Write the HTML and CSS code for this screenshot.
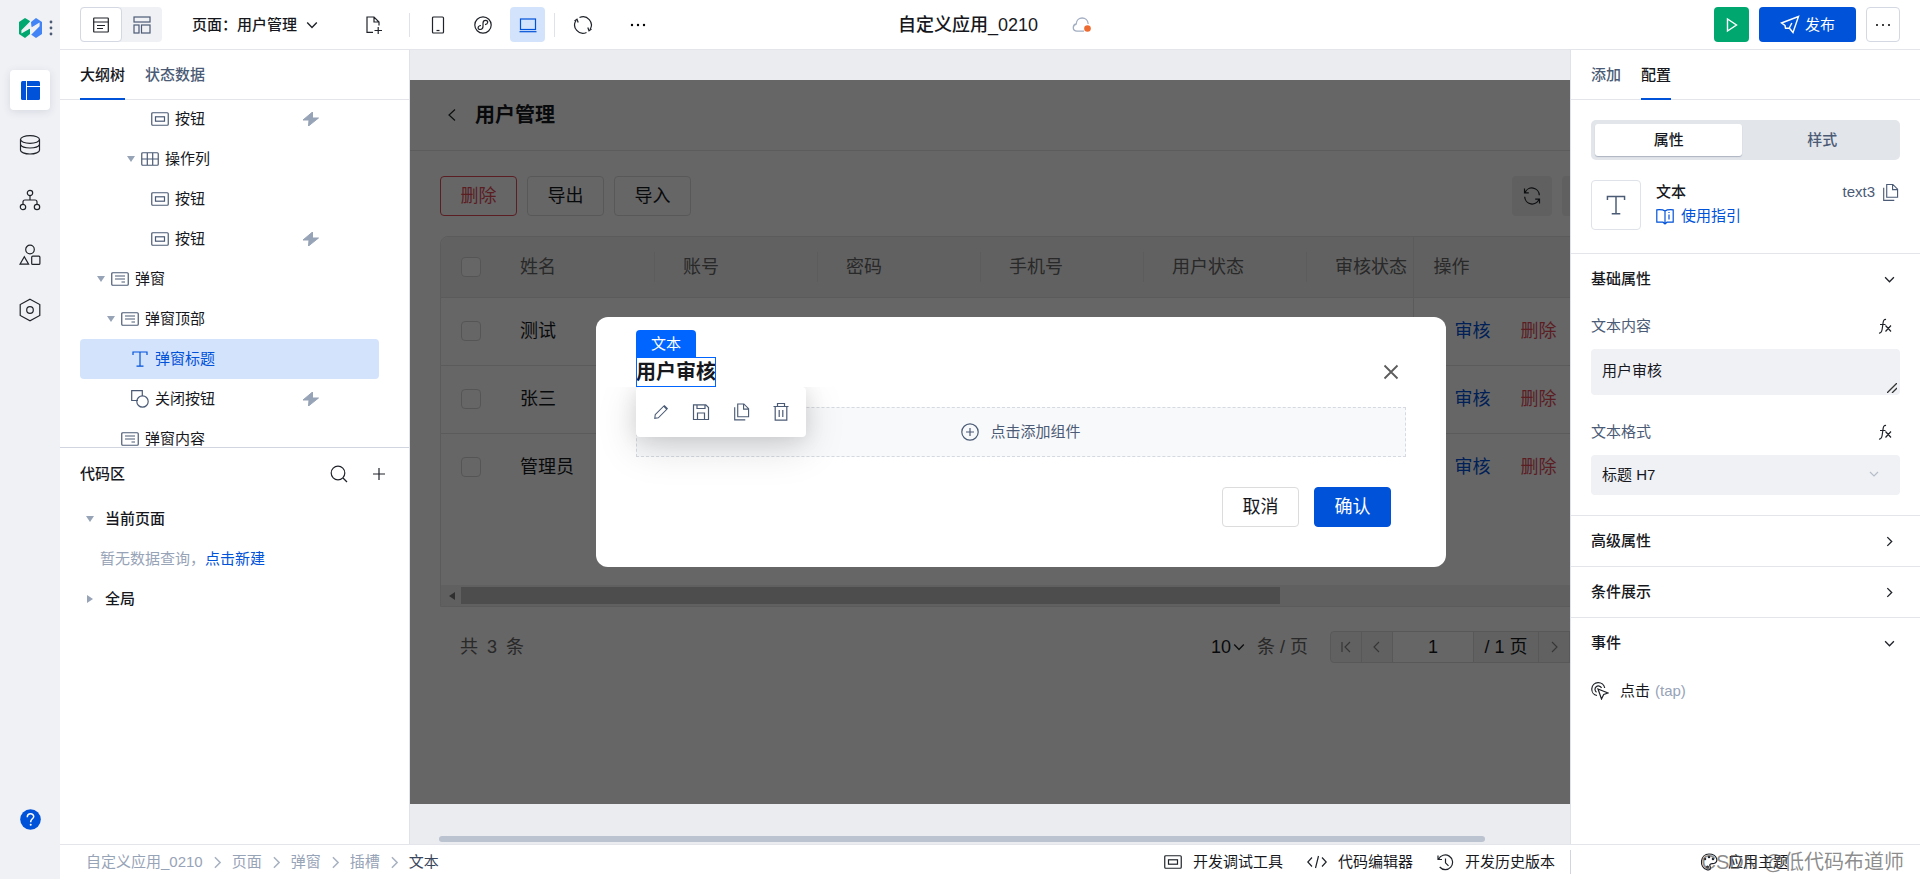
FILE: index.html
```html
<!DOCTYPE html>
<html lang="zh-CN">
<head>
<meta charset="utf-8">
<title>自定义应用_0210</title>
<link rel="stylesheet" href="styles.css">
</head>
<body>
<svg class="sprite" aria-hidden="true">
  <symbol id="i-button" viewBox="0 0 18 14"><rect x=".75" y=".75" width="16.5" height="12.5" rx="1"/><rect x="4.5" y="4.8" width="9" height="4.4"/></symbol>
  <symbol id="i-columns" viewBox="0 0 18 14"><rect x=".75" y=".75" width="16.5" height="12.5" rx="1"/><path d="M.8 7h16.4M6.3 1v12M11.7 1v12"/></symbol>
  <symbol id="i-modal" viewBox="0 0 18 14"><rect x=".75" y=".75" width="16.5" height="12.5" rx="1"/><path d="M4 4h10M4 7h10M10.5 10h3.5"/></symbol>
  <symbol id="i-text" viewBox="0 0 18 18"><path d="M2 5V2h14v3M9 2v14M5.5 16.2h7"/></symbol>
  <symbol id="i-shape" viewBox="0 0 18 18"><path d="M7 10.5H.7V.7h10.6V6"/><circle cx="11.5" cy="11.5" r="5.7"/></symbol>
  <symbol id="i-bolt" viewBox="0 0 16 14"><path d="M9.500 0 0 8h6l-.5 6L15.500 6H9.500z"/></symbol>
  <symbol id="i-down" viewBox="0 0 10 10"><path d="M1 3l4 4 4-4"/></symbol>
  <symbol id="i-right" viewBox="0 0 10 10"><path d="M3 1l4 4-4 4"/></symbol>
  <symbol id="i-left" viewBox="0 0 10 14"><path d="M8 1.500 2 7l6 5.500"/></symbol>
  <symbol id="i-copy" viewBox="0 0 18 20"><path d="M5 1.500h6.500L16.500 6.500V15H5zM11.200 1.700V7h5.200M1.800 5v13.300H13"/></symbol>
  <symbol id="i-fx" viewBox="0 0 16 16"><path d="M2 15c2.500.4 2.800-1.800 3.200-4L6.200 4C6.600 2 7.500 1 9 1.600M3 6.500h5.500M8.500 7.500l5.500 6M14 7.500l-5.500 6"/></symbol>
</svg>

<div class="app">
  <nav class="rail" aria-label="主导航">
    <div class="brand">
      <svg width="23" height="20" viewBox="0 0 23 20"><path d="M0 4 6 0l5 3v13l-5 4-6-4z" fill="#00a870"/><path d="M12 4l5-4 6 4v12l-6 4-5-3.500z" fill="#4284f5"/><path d="M11.500 0v4L3 12.500v2l9.500-5.500M11.500 20v-3.500L20 8V5.500L11 11" fill="#f0f1f5" stroke="#f0f1f5" stroke-width="1.200"/></svg>
      <svg width="4" height="16" viewBox="0 0 4 16" fill="#4b5b76"><circle cx="2" cy="2" r="1.400"/><circle cx="2" cy="8" r="1.400"/><circle cx="2" cy="14" r="1.400"/></svg>
    </div>
    <button class="rail-btn active" aria-label="页面"><svg width="19" height="19" viewBox="0 0 19 19"><rect width="19" height="19" rx="1.500" fill="#0052d9"/><path d="M5.500 0v19M5.500 5.500H19" stroke="#fff" stroke-width="1"/></svg></button>
    <button class="rail-btn" aria-label="数据"><svg class="line" width="22" height="22" viewBox="0 0 22 22"><ellipse cx="11" cy="5.500" rx="9.500" ry="3.800"/><path d="M1.500 5.500v10.700c0 2 4.200 3.800 9.500 3.800s9.500-1.800 9.500-3.800V5.500M1.500 10.500c1 2.200 4 3.500 9.500 3.500s8.500-1.300 9.500-3.500"/></svg></button>
    <button class="rail-btn" aria-label="流程"><svg class="line" width="22" height="22" viewBox="0 0 22 22"><circle cx="11" cy="4" r="2.700"/><circle cx="4" cy="18" r="2.700"/><circle cx="18" cy="18" r="2.700"/><path d="M11 6.700V11M4 15.300V13a2 2 0 0 1 2-2h10a2 2 0 0 1 2 2v2.300"/></svg></button>
    <button class="rail-btn" aria-label="组件"><svg class="line" width="22" height="22" viewBox="0 0 22 22"><circle cx="11" cy="5.500" r="4.300"/><path d="M5.300 12.800 1 20.200h8.600z"/><rect x="12.700" y="12.200" width="8.200" height="8.200" rx="1"/></svg></button>
    <button class="rail-btn" aria-label="设置"><svg class="line" width="22" height="24" viewBox="0 0 22 24"><path d="M11 1.200 20.800 6.500v11L11 22.800 1.200 17.500v-11z"/><circle cx="11" cy="12" r="3.300"/></svg></button>
    <button class="rail-btn help" aria-label="帮助"><svg width="21" height="21" viewBox="0 0 21 21"><circle cx="10.500" cy="10.500" r="10.300" fill="#0052d9"/><path d="M7.300 8.200c0-4.700 6.700-4.200 6.400-.5-.2 2-3 2.300-3 5v.5" fill="none" stroke="#fff" stroke-width="1.500"/><circle cx="10.700" cy="15.700" r="1" fill="#fff"/></svg></button>
  </nav>

  <header class="topbar">
    <div class="view-switch">
      <button class="view on" aria-label="大纲"><svg class="line" width="16" height="16" viewBox="0 0 16 16"><rect x=".7" y="1" width="14.600" height="14" rx=".5"/><path d="M.7 5h14.600M4 8.500h8M4 11.500h6"/></svg></button>
      <button class="view" aria-label="布局"><svg class="line slate" width="18" height="18" viewBox="0 0 18 18"><rect x="1" y="1" width="16" height="5"/><rect x="1" y="9" width="5" height="8"/><rect x="8.500" y="9" width="8.500" height="8"/></svg></button>
    </div>
    <button class="page-pick">页面：用户管理 <svg class="line" width="12" height="12"><use href="#i-down"/></svg></button>
    <button class="tool new-page" aria-label="新建页面"><svg class="line" width="18" height="20" viewBox="0 0 18 20"><path d="M8 17.300H2V2h7l5 5v3.500M9 2v5h5M9.500 15.500H17M13.200 12v7"/></svg></button>
    <span class="rule"></span>
    <button class="tool" aria-label="手机"><svg class="line" width="14" height="20" viewBox="0 0 14 20"><rect x="1.500" y="2" width="11" height="16" rx="1"/><path d="M5.500 15.500h3"/></svg></button>
    <button class="tool" aria-label="小程序"><svg class="line" width="18" height="18" viewBox="0 0 18 18"><circle cx="9" cy="9" r="8.200"/><path d="M7 9.500c-4 .5-3.500 4.200-.8 4 1.600-.1 2.800-1.300 2.800-3V7.200c0-1.600 1.200-2.800 2.700-2.800 2.800 0 2.800 3.600-.7 4.200"/></svg></button>
    <button class="tool on" aria-label="电脑"><svg class="line blue" width="18" height="16" viewBox="0 0 18 16"><rect x="1.500" y="2" width="15" height="10.500"/><path d="M.5 14.700h17"/></svg></button>
    <span class="rule"></span>
    <button class="tool refresh" aria-label="刷新"><svg class="line" width="20" height="20" viewBox="0 0 20 20"><path d="M6.500 2.500A8.300 8.300 0 0 1 17 14.500M13.500 17.500A8.300 8.300 0 0 1 3 5.500"/><path d="M1.500 6 4 4.300 5.200 7.500M14.800 12.500 16 15.700l2.500-1.700"/></svg></button>
    <button class="tool" aria-label="更多"><svg width="16" height="4" viewBox="0 0 16 4"><circle cx="2" cy="2" r="1.200"/><circle cx="8" cy="2" r="1.200"/><circle cx="14" cy="2" r="1.200"/></svg></button>
    <h1 class="app-name">自定义应用_0210 <svg width="20" height="16" viewBox="0 0 20 16"><path d="M12 14.200H5C.2 14 .2 8 4.200 7c.4-8 11.500-8 12 0" fill="none" stroke="#a3aec2" stroke-width="1.300"/><circle cx="15.500" cy="11.500" r="3.300" fill="#ed6b30"/></svg></h1>
    <div class="actions">
      <button class="run" aria-label="预览"><svg width="12" height="16" viewBox="0 0 12 16"><path d="M1.500 2v12l9-6z" fill="none" stroke="#fff" stroke-width="1.400"/></svg></button>
      <button class="publish"><svg width="20" height="19" viewBox="0 0 20 19"><path d="M1.500 8 18.500 1.500 13 17.500 9.300 13 5.500 13.200 5 10.500zM9.300 13l2.500-5" fill="none" stroke="#fff" stroke-width="1.400"/></svg>发布</button>
      <button class="more" aria-label="更多操作"><svg width="16" height="4" viewBox="0 0 16 4"><circle cx="2" cy="2" r="1"/><circle cx="8" cy="2" r="1"/><circle cx="14" cy="2" r="1"/></svg></button>
    </div>
  </header>

  <aside class="left">
    <div class="tabs"><button class="tab on">大纲树</button><button class="tab">状态数据</button></div>
    <ul class="tree">
      <li class="node d4"><svg class="ico w"><use href="#i-button"/></svg>按钮<svg class="bolt"><use href="#i-bolt"/></svg></li>
      <li class="node d3"><i class="caret"></i><svg class="ico w"><use href="#i-columns"/></svg>操作列</li>
      <li class="node d4"><svg class="ico w"><use href="#i-button"/></svg>按钮</li>
      <li class="node d4"><svg class="ico w"><use href="#i-button"/></svg>按钮<svg class="bolt"><use href="#i-bolt"/></svg></li>
      <li class="node d0"><i class="caret"></i><svg class="ico w"><use href="#i-modal"/></svg>弹窗</li>
      <li class="node d1"><i class="caret"></i><svg class="ico w"><use href="#i-modal"/></svg>弹窗顶部</li>
      <li class="node d2 on"><svg class="ico"><use href="#i-text"/></svg>弹窗标题</li>
      <li class="node d2"><svg class="ico"><use href="#i-shape"/></svg>关闭按钮<svg class="bolt"><use href="#i-bolt"/></svg></li>
      <li class="node d1"><svg class="ico w"><use href="#i-modal"/></svg>弹窗内容</li>
    </ul>
    <section class="code">
      <div class="code-head"><h2>代码区</h2>
        <button aria-label="搜索"><svg class="line" width="18" height="18" viewBox="0 0 18 18"><circle cx="8" cy="8" r="6.800"/><path d="M13 13l4 4"/></svg></button>
        <button aria-label="新建"><svg class="line" width="14" height="14" viewBox="0 0 14 14"><path d="M1 7h12M7 1v12"/></svg></button>
      </div>
      <div class="group"><i class="caret"></i>当前页面</div>
      <p class="empty">暂无数据查询，<a href="#new">点击新建</a></p>
      <div class="group"><i class="caret side"></i>全局</div>
    </section>
  </aside>

  <main class="stage">
    <div class="viewport">
      <div class="device">
        <div class="page-head"><svg class="line" width="10" height="14"><use href="#i-left"/></svg><h2>用户管理</h2></div>
        <div class="page-body">
          <div class="ops">
            <button class="btn danger">删除</button><button class="btn">导出</button><button class="btn">导入</button>
            <button class="sq first" aria-label="刷新表格"><svg class="line" width="18" height="18" viewBox="0 0 18 18"><path d="M1.500 1.500v4.300h4.300M2 5.700a7.400 7.400 0 0 1 14.300 2.500M16.500 16.500v-4.300h-4.300M16 12.300A7.400 7.400 0 0 1 1.700 9.800"/></svg></button>
            <button class="sq" aria-label="表格设置"></button>
          </div>
          <div class="grid">
            <table>
              <colgroup><col class="c-check"><col class="c-data"><col class="c-data"><col class="c-data"><col class="c-data"><col class="c-data"><col class="c-cut"><col></colgroup>
              <thead><tr><th><input type="checkbox" aria-label="全选"></th><th>姓名</th><th>账号</th><th>密码</th><th>手机号</th><th>用户状态</th><th>审核状态</th><th class="fixed-th">操作</th></tr></thead>
              <tbody>
                <tr><td><input type="checkbox" aria-label="测试"></td><td>测试</td><td></td><td></td><td></td><td></td><td></td><td class="fixed"><a href="#a1">审核</a><a class="del" href="#d1">删除</a></td></tr>
                <tr><td><input type="checkbox" aria-label="张三"></td><td>张三</td><td></td><td></td><td></td><td></td><td></td><td class="fixed"><a href="#a2">审核</a><a class="del" href="#d2">删除</a></td></tr>
                <tr><td><input type="checkbox" aria-label="管理员"></td><td>管理员</td><td></td><td></td><td></td><td></td><td></td><td class="fixed"><a href="#a3">审核</a><a class="del" href="#d3">删除</a></td></tr>
              </tbody>
            </table>
            <div class="hbar"><i class="arrow"></i><i class="thumb"></i></div>
          </div>
          <div class="pager">
            <span class="muted total">共 <span class="num">3</span> 条</span>
            <button class="size">10<svg class="line" width="12" height="12"><use href="#i-down"/></svg></button>
            <span class="muted per">条 / 页</span>
            <div class="pages">
              <button aria-label="首页"><svg class="line" width="12" height="12" viewBox="0 0 12 12"><path d="M2 1v10M10 1 5 6l5 5"/></svg></button>
              <button aria-label="上一页"><svg class="line" width="12" height="12" viewBox="0 0 12 12"><path d="M8 1 3 6l5 5"/></svg></button>
              <input type="text" value="1" aria-label="页码"><span class="of">/ 1 页</span>
              <button aria-label="下一页"><svg class="line" width="12" height="12" viewBox="0 0 12 12"><path d="M4 1l5 5-5 5"/></svg></button>
              <button aria-label="末页"></button>
            </div>
          </div>
        </div>

        <div class="mask">
          <div class="dialog" role="dialog" aria-label="用户审核">
            <div class="dialog-head">
              <div class="picked"><span class="badge">文本</span><h3>用户审核</h3>
                <div class="quick">
                  <button aria-label="编辑"><svg class="line slate" width="16" height="16" viewBox="0 0 18 18"><path d="M2.500 12 12 2.500l3.500 3.500L6 15.500l-4 .7zM12.500 1.500l4 4"/></svg></button>
                  <button aria-label="保存"><svg class="line slate" width="18" height="18" viewBox="0 0 18 18"><path d="M1.500 1.800h12.300l2.700 2.700v12h-15zM5 2v3.500h8V2M5.500 16.500V10h7v6.500"/></svg></button>
                  <button aria-label="复制"><svg class="line slate" width="17" height="20"><use href="#i-copy"/></svg></button>
                  <button aria-label="移除"><svg class="line slate" width="18" height="20" viewBox="0 0 18 20"><path d="M1.500 4.500h15M3.200 4.500v13.700h11.600V4.500M5.500 4V1.500h7V4M7.200 8v7M10.800 8v7"/></svg></button>
                </div>
              </div>
              <button class="close" aria-label="关闭"><svg width="16" height="16" viewBox="0 0 16 16"><path d="M1.500 1.500l13 13M14.500 1.500l-13 13" stroke="#5c5c5c" stroke-width="1.800"/></svg></button>
            </div>
            <button class="slot"><svg class="line slate" width="18" height="18" viewBox="0 0 18 18"><circle cx="9" cy="9" r="8.200"/><path d="M5 9h8M9 5v8"/></svg>点击添加组件</button>
            <div class="dialog-foot"><button class="btn">取消</button><button class="btn primary">确认</button></div>
          </div>
        </div>
      </div>
    </div>
    <div class="scroller"><i></i></div>
  </main>

  <aside class="right">
    <div class="tabs"><button class="tab">添加</button><button class="tab on">配置</button></div>
    <div class="intro">
      <div class="seg"><button class="on">属性</button><button>样式</button></div>
      <div class="comp">
        <div class="comp-ico"><svg class="line slate" width="22" height="22"><use href="#i-text"/></svg></div>
        <div class="comp-name"><strong>文本</strong><a href="#guide"><svg class="line blue" width="18" height="17" viewBox="0 0 18 17"><path d="M9 3v12.500M9 3C7 1.500 4 1.500.8 1.800v12.400H7L9 16l2-1.800h6.200V1.800C14 1.500 11 1.500 9 3M13 6.500v5M13 4v1"/></svg>使用指引</a></div>
        <div class="comp-id">text3<button aria-label="复制 ID"><svg class="line slate" width="17" height="19"><use href="#i-copy"/></svg></button></div>
      </div>
    </div>
    <section class="panel">
      <h2>基础属性<svg class="line"><use href="#i-down"/></svg></h2>
      <div class="fields">
        <div class="field">
          <div class="label"><label for="content">文本内容</label><button aria-label="绑定文本内容"><svg class="line" width="16" height="16"><use href="#i-fx"/></svg></button></div>
          <div class="control"><textarea id="content" rows="1">用户审核</textarea><svg class="grip" width="10" height="10" viewBox="0 0 10 10"><path d="M0 10 10 0M5 10l5-5" stroke="#333" stroke-width="1.300"/></svg></div>
        </div>
        <div class="field">
          <div class="label"><label for="format">文本格式</label><button aria-label="绑定文本格式"><svg class="line" width="16" height="16"><use href="#i-fx"/></svg></button></div>
          <div class="control"><select id="format"><option>标题 H7</option></select><svg class="drop" width="10" height="10"><use href="#i-down"/></svg></div>
        </div>
      </div>
    </section>
    <section class="panel"><h2>高级属性<svg class="line"><use href="#i-right"/></svg></h2></section>
    <section class="panel"><h2>条件展示<svg class="line"><use href="#i-right"/></svg></h2></section>
    <section class="panel"><h2>事件<svg class="line"><use href="#i-down"/></svg></h2>
      <div class="event"><svg class="line" width="18" height="18" viewBox="0 0 18 18"><path d="M6 13.500A6.500 6.500 0 1 1 13.700 6M5.500 10.200A3.400 3.400 0 1 1 10.500 6M7 7l10 4-4.300 1.500L10.500 17z"/></svg>点击<span>(tap)</span></div>
    </section>
  </aside>

  <footer class="status">
    <nav class="crumbs" aria-label="层级">
      <a href="#app">自定义应用_0210</a><svg><use href="#i-right"/></svg><a href="#page">页面</a><svg><use href="#i-right"/></svg><a href="#modal">弹窗</a><svg><use href="#i-right"/></svg><a href="#slot">插槽</a><svg><use href="#i-right"/></svg><a class="now" href="#text">文本</a>
    </nav>
    <div class="dev">
      <button><svg class="line" width="18" height="14"><use href="#i-button"/></svg>开发调试工具</button>
      <button><svg class="line" width="20" height="14" viewBox="0 0 20 14"><path d="M5 2.500.8 7 5 11.500M15 2.500 19.200 7 15 11.500M11.500 1l-3 12"/></svg>代码编辑器</button>
      <button><svg class="line" width="17" height="17" viewBox="0 0 17 17"><path d="M1 1.500V5.500h4M1.600 5.300A7.300 7.300 0 1 1 2.700 13M8.500 4.500v4.300l3 3"/></svg>开发历史版本</button>
    </div>
    <div class="theme">
      <button><svg class="line" width="18" height="18" viewBox="0 0 18 18"><path d="M7 16.800C-1.500 14 .3 1 9 1c8.500 0 10 8.500 5 9.500-2 .4-4.200-.3-4.200 1.800 0 1.600 1 1.600.7 3-.3 1.500-2 1.900-3.500 1.500z"/><circle cx="5" cy="6" r=".7"/><circle cx="9" cy="4" r=".7"/><circle cx="13" cy="6" r=".7"/><circle cx="7.500" cy="14" r=".9"/></svg>应用主题</button>
      <span class="mark">CSDN @低代码布道师</span>
    </div>
  </footer>
</div>
</body>
</html>
```
FILE: styles.css
```css
* { box-sizing: border-box; }
body {
  margin: 0;
  font: 15px/24px "Liberation Sans", "Noto Sans CJK SC", sans-serif;
  color: #16181d;
  background: #fff;
}
button, input, select, textarea { font: inherit; color: inherit; margin: 0; }
button { padding: 0; border: 0; background: none; cursor: pointer; }
button, a { display: inline-flex; align-items: center; justify-content: center; white-space: nowrap; }
a { color: #0052d9; text-decoration: none; }
h1, h2, h3, p, ul { margin: 0; padding: 0; }
svg { flex: none; }
.sprite { position: absolute; width: 0; height: 0; }
.line { fill: none; stroke: #1f2329; stroke-width: 1.2; }
.slate { stroke: #4b5b76; }
.blue { stroke: #0052d9; }

.app {
  display: grid;
  grid-template: 50px minmax(0, 1fr) 35px / 60px 350px minmax(0, 1fr) 350px;
  grid-template-areas: "rail top top top" "rail left stage right" "rail foot foot foot";
  height: 100vh;
}

/* Icon rail */
.rail {
  grid-area: rail;
  display: flex;
  flex-direction: column;
  align-items: center;
  gap: 15px;
  padding-bottom: 40px;
  background: #f0f1f5;
}
.brand { display: flex; align-items: center; gap: 7px; height: 55px; padding-left: 12px; }
.rail-btn { width: 40px; height: 40px; border-radius: 4px; }
.rail-btn.active { background: #fff; box-shadow: 0 2px 8px rgba(30, 50, 90, .12); }
.help { margin-top: auto; }

/* Top bar */
.topbar {
  grid-area: top;
  position: relative;
  display: flex;
  align-items: center;
  padding: 0 20px;
  border-bottom: 1px solid #e3e5ea;
}
.view-switch { display: flex; background: #f0f1f5; border-radius: 4px; }
.view { width: 40px; height: 35px; }
.view.on { width: 42px; background: #fff; border: 1px solid #d3d8e3; border-radius: 4px; }
.page-pick { gap: 9px; margin-left: 30px; font-weight: 500; }
.tool { width: 35px; height: 35px; margin: 0 5px; border-radius: 4px; }
.tool.on { background: #d4e3fc; }
.new-page { margin: 0 18px 0 38px; }
.rule { width: 1px; height: 24px; background: #dfe2e8; }
.rule + .tool { margin-left: 10px; }
.tool.on + .rule { margin-left: 4px; }
.refresh { margin-right: 15px; }
.app-name {
  position: absolute;
  left: 50%;
  display: flex;
  align-items: center;
  gap: 34px;
  margin-left: -92px;
  font-size: 18px;
  font-weight: 500;
}
.actions { display: flex; gap: 10px; margin-left: auto; }
.run { width: 35px; height: 35px; border-radius: 4px; background: #00a870; }
.publish { gap: 5px; width: 97px; height: 35px; border-radius: 4px; background: #0052d9; color: #fff; }
.more { width: 34px; height: 35px; border: 1px solid #d3d8e3; border-radius: 4px; }

/* Side panels */
.left { grid-area: left; display: flex; flex-direction: column; border-right: 1px solid #dfe2e8; }
.right { grid-area: right; border-left: 1px solid #dfe2e8; overflow: hidden; }
.tabs { display: flex; flex: none; gap: 20px; height: 49px; padding: 0 20px; box-shadow: 0 1px 0 #e3e5ea; }
.tab { position: relative; height: 50px; color: #4b5b76; font-weight: 500; }
.tab.on { color: #16181d; box-shadow: inset 0 -2px 0 #0052d9; }

.tree { flex: none; height: 348px; padding: 0 30px 0 20px; overflow: hidden; list-style: none; }
.node { display: flex; align-items: center; gap: 6px; height: 40px; border-radius: 4px; }
.node.on { background: #d4e3fc; color: #0052d9; }
.ico { width: 18px; height: 18px; fill: none; stroke: #4b5b76; stroke-width: 1.2; }
.ico.w { height: 14px; }
.on .ico { stroke: #0052d9; }
.d0 { padding-left: 31px; }
.d1 { padding-left: 41px; }
.d2 { padding-left: 51px; }
.d3 { padding-left: 61px; }
.d4 { padding-left: 71px; }
.caret { width: 0; height: 0; border: 4px solid transparent; border-top: 6px solid #97a3b7; border-bottom: 0; }
.node .caret { margin-left: -14px; }
.bolt { width: 16px; height: 14px; margin-left: auto; margin-right: 60px; fill: #97a3b7; stroke: #97a3b7; stroke-width: 1; }
.caret.side { border: 4px solid transparent; border-left: 6px solid #97a3b7; border-right: 0; }

.code { flex: 1; border-top: 1px solid #d0d5e0; }
.code-head { display: flex; align-items: center; gap: 20px; height: 51px; padding: 0 20px; }
.code-head h2 { flex: 1; font-size: 15px; font-weight: 500; }
.code-head button { width: 20px; height: 30px; }
.group { display: flex; align-items: center; gap: 11px; height: 40px; padding-left: 26px; font-weight: 500; }
.caret.side { margin: 0 1px; }
.empty { padding-left: 40px; line-height: 40px; color: #97a3b7; }

/* Canvas */
.stage { grid-area: stage; display: flex; flex-direction: column; padding-top: 30px; background: #ebecf0; }
.viewport { flex: 1; overflow: hidden; background: #fff; }
.device { position: relative; display: flex; flex-direction: column; min-width: 1222px; height: 100%; }
.scroller { height: 40px; padding: 32px 0 0 29px; }
.scroller i { display: block; width: 92.5%; height: 6px; border-radius: 3px; background: #bbc3d0; }
.page-head { display: flex; align-items: center; gap: 18px; height: 71px; padding: 0 37px; border-bottom: 1px solid #e7e7e7; }
.page-head h2 { font-size: 20px; font-weight: 700; }
.page-body { padding: 25px 30px; font-size: 18px; }
.ops { display: flex; gap: 10px; margin-bottom: 20px; }
.btn { width: 77px; height: 40px; border: 1px solid #dcdcdc; border-radius: 4px; font-size: 18px; background: #fff; }
.btn.danger { border-color: #e34d59; color: #e34d59; }
.btn.primary { border-color: #0052d9; background: #0052d9; color: #fff; }
.sq { width: 40px; height: 40px; border-radius: 4px; background: #f0f0f0; }
.sq.first { margin-left: auto; }

.grid { border: 1px solid #e3e3e3; border-radius: 8px 8px 0 0; overflow: hidden; }
.grid table { width: 100%; table-layout: fixed; border-collapse: collapse; }
.c-check { width: 51px; }
.c-data { width: 163px; }
.c-cut { width: 106px; }
.grid th, .grid td { padding: 0 28px; text-align: left; white-space: nowrap; border-bottom: 1px solid #e3e3e3; font-weight: 400; }
.grid th { height: 60px; background: #f3f3f3; color: #666; }
.grid td { height: 68px; }
.grid tbody tr:last-child td { border-bottom: 0; }
.grid th:first-child, .grid td:first-child { padding: 0 0 0 20px; }
.grid input { display: block; width: 20px; height: 20px; appearance: none; border: 1px solid #d5d5d5; border-radius: 4px; background: #fff; }
.grid th:nth-child(n+2):nth-child(-n+6) { background: linear-gradient(#e7e7e7, #e7e7e7) right center / 1px 30px no-repeat #f3f3f3; }
.grid .fixed-th { padding: 0 20px; border-left: 1px solid #e3e3e3; }
.grid .fixed { padding: 0 41px; border-left: 1px solid #e3e3e3; }
.fixed a + a { margin-left: 30px; }
.fixed .del { color: #e34d59; }
.hbar { display: flex; align-items: center; gap: 6px; height: 21px; margin-top: 84px; padding-left: 8px; background: #f0f0f0; }
.arrow { border: 4px solid transparent; border-right: 6px solid #777; border-left: 0; }
.thumb { width: 819px; height: 17px; background: #c1c1c1; }

.pager { display: flex; align-items: center; height: 80px; padding-left: 20px; }
.muted { color: #666; }
.total { flex: 1; }
.num { margin: 0 4px; }
.size { gap: 2px; }
.per { margin: 0 22px 0 12px; }
.pages { display: flex; height: 32px; border: 1px solid #dcdcdc; border-radius: 4px; background: #f3f3f3; }
.pages > * { border: 0; border-right: 1px solid #dcdcdc; }
.pages > :last-child { border-right: 0; }
.pages button { width: 31px; }
.pages .line { stroke: #888; }
.pages input { width: 81px; text-align: center; background: #fff; padding: 0; }
.of { width: 65px; text-align: center; line-height: 30px; }

.mask { position: absolute; inset: 0; display: flex; align-items: center; justify-content: center; background: rgba(0, 0, 0, .6); }
.dialog { width: 850px; height: 250px; padding: 20px 40px; border-radius: 12px; background: #fff; }
.dialog-head { display: flex; align-items: center; justify-content: space-between; height: 70px; padding-right: 7px; }
.picked { position: relative; width: 80px; height: 30px; outline: 1px solid #0064ff; outline-offset: -1px; }
.picked h3 { font-size: 20px; line-height: 30px; font-weight: 700; white-space: nowrap; }
.badge { position: absolute; left: 0; bottom: 100%; width: 60px; text-align: center; line-height: 27px; border-radius: 4px 4px 0 0; background: #0064ff; color: #fff; }
.quick { position: absolute; left: 0; top: 100%; display: flex; width: 170px; height: 50px; padding: 0 5px; border-radius: 4px; background: #fff; box-shadow: 0 10px 40px rgba(0, 0, 0, .15), 0 2px 20px rgba(0, 0, 0, .1); clip-path: inset(0 -60px -60px -60px); }
.quick button { width: 40px; }
.close { width: 16px; height: 30px; }
.slot { width: 100%; height: 50px; gap: 11px; border: 1px dashed #d6d9df; background: #f8f9fb; color: #4b5b76; }
.dialog-foot { display: flex; justify-content: flex-end; gap: 15px; padding: 30px 15px 0 0; }

/* Properties */
.intro { padding: 21px 20px 23px; border-bottom: 1px solid #e3e5ea; }
.seg { display: flex; padding: 4px; border-radius: 5px; background: #e2e5ea; }
.seg button { flex: 1; height: 32px; padding-left: 6px; border-radius: 3px; color: #4b5b76; font-weight: 500; }
.seg .on { flex: 0 0 49%; padding: 0; background: #fff; color: #16181d; box-shadow: 0 1px 1px rgba(75, 91, 118, .35); }
.comp { display: flex; align-items: flex-start; margin-top: 20px; }
.comp-ico { display: flex; align-items: center; justify-content: center; width: 50px; height: 50px; border: 1px solid #dfe2e8; border-radius: 4px; }
.comp-name { display: flex; flex-direction: column; align-items: flex-start; flex: 1; margin-left: 15px; }
.comp-name strong { font-weight: 500; }
.comp-name a { gap: 7px; }
.comp-id { display: flex; align-items: center; gap: 7px; padding-right: 1px; color: #4b5b76; }
.panel { border-bottom: 1px solid #e3e5ea; padding: 0 20px; }
.panel:last-child { border-bottom: 0; }
.panel h2 { display: flex; align-items: center; justify-content: space-between; height: 50px; padding-right: 5px; font-size: 15px; font-weight: 500; }
.panel h2 svg { width: 11px; height: 11px; }
.fields { display: flex; flex-direction: column; gap: 20px; padding: 5px 0 20px; }
.label { display: flex; align-items: center; justify-content: space-between; height: 34px; margin-bottom: 6px; padding-right: 7px; color: #4b5b76; }
.control { position: relative; display: flex; }
.control textarea, .control select { width: 100%; border: 0; border-radius: 4px; background: #f0f1f5; resize: none; appearance: none; padding: 8px 11px; }
.control textarea { height: 46px; line-height: 28px; overflow: hidden; }
.control select { height: 40px; }
.grip { position: absolute; right: 3px; bottom: 2px; }
.drop { position: absolute; right: 21px; top: 14px; fill: none; stroke: #b6bdc9; stroke-width: 1.2; }
.event { display: flex; align-items: center; height: 45px; }
.event svg { margin-right: 11px; }
.event span { margin-left: 5px; color: #97a3b7; }

/* Status bar */
.status { grid-area: foot; display: flex; align-items: center; border-top: 1px solid #e3e5ea; }
.crumbs { display: flex; align-items: center; flex: 1; padding-left: 26px; }
.crumbs a { color: #97a3b7; }
.crumbs .now { color: #3a465c; }
.crumbs svg { width: 13px; height: 13px; margin: 0 8px; fill: none; stroke: #a9b2c2; stroke-width: 1.2; }
.dev { display: flex; gap: 24px; padding-right: 15px; }
.dev button { gap: 11px; }
.theme { position: relative; display: flex; align-items: center; width: 350px; height: 24px; padding-left: 129px; border-left: 1px solid #d0d5e0; }
.theme button { gap: 10px; }
.mark { position: absolute; right: 16px; font-size: 20px; color: rgba(90, 90, 90, .7); white-space: nowrap; }
```
